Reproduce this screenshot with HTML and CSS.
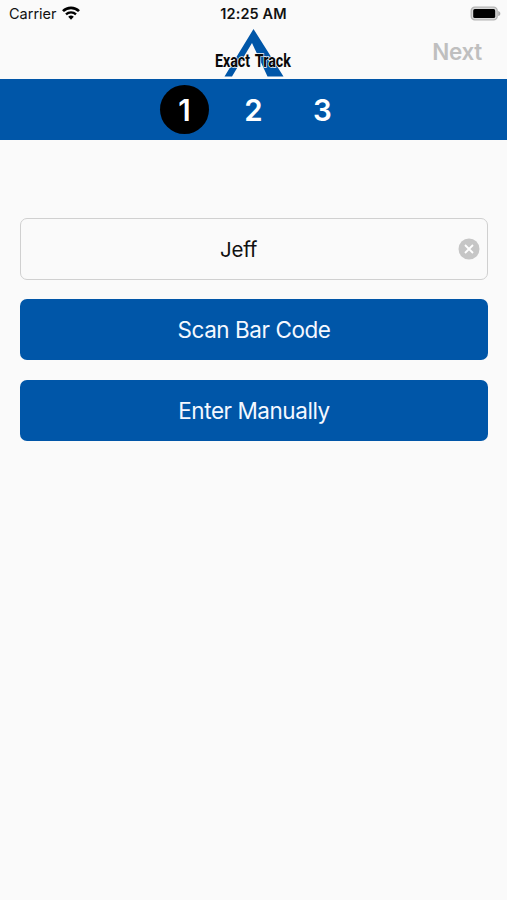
FILE: index.html
```
<!DOCTYPE html>
<html lang="en">
<head>
<meta charset="UTF-8">
<meta name="viewport" content="width=device-width, initial-scale=1.0">
<title>Exact Track</title>
<link rel="stylesheet" href="styles.css">
</head>
<body>
<div class="status-bar">
    <div class="carrier">
        <span>Carrier</span>
        <svg class="wifi" width="18" height="14" viewBox="0 0 18 14">
            <path d="M1 5.1a11.5 11.5 0 0 1 16 0" fill="none" stroke="#000" stroke-width="2.7"/>
            <path d="M4 8.3a7.2 7.2 0 0 1 10 0" fill="none" stroke="#000" stroke-width="2.3"/>
            <path d="M6.2 10.8a4.1 4.1 0 0 1 5.6 0L9 13.7z" fill="#000"/>
        </svg>
    </div>
    <div class="time">12:25 AM</div>
    <div class="power">
        <svg width="32" height="16" viewBox="0 0 32 16">
            <rect x="1.2" y="1.2" width="26" height="12.6" rx="3.6" fill="#d8d8d8" stroke="#b4b4b4" stroke-width="1.3"/>
            <path d="M28.2 4.9c2.8.8 2.8 4.4 0 5.2z" fill="#aaa"/>
            <rect x="3.2" y="3.1" width="22" height="8.9" rx="1.6" fill="#000"/>
        </svg>
    </div>
</div>
<div class="nav-bar">
    <svg class="logo" width="90" height="50" viewBox="0 0 90 50">
        <path d="M44.500 1L74.500 48.500H58.500L43 15L23 48.500H15.500z" fill="#0056a8"/>
        <text class="logo-text" transform="translate(6 38.500) scale(.77 1)">Exact Track</text>
    </svg>
    <a class="next">Next</a>
</div>
<div class="steps">
    <span class="step active">1</span>
    <span class="step">2</span>
    <span class="step">3</span>
</div>
<div class="container">
    <div class="field">
        <span class="value">Jeff</span>
        <svg class="clear" width="22" height="22" viewBox="0 0 22 22">
            <circle cx="11" cy="11" r="10.500" fill="#c6c6c6"/>
            <path d="M7 7l8 8M15 7l-8 8" stroke="#fff" stroke-width="1.8"/>
        </svg>
    </div>
    <button class="scan">Scan Bar Code</button>
    <button class="manual">Enter Manually</button>
</div>
</body>
</html>
```
FILE: styles.css
```
body {
    font-family: Inter, sans-serif;
    margin: 0;
    height: 900px;
    background-color: #fafafa;
    color: #111;
}

.status-bar {
    display: grid;
    grid-template-columns: 1fr auto 1fr;
    align-items: center;
    height: 27px;
    padding: 0 5px 0 9px;
    font-size: 14.5px;
}

.carrier {
    display: flex;
    align-items: center;
    gap: 5px;
}

.wifi {
    display: block;
    margin-bottom: 2px;
}

.time {
    font-weight: 600;
    font-size: 14.5px;
    letter-spacing: 0.1px;
    padding-right: 4px;
}

.power {
    display: flex;
    justify-content: flex-end;
}

.nav-bar {
    display: grid;
    grid-template-columns: 1fr auto 1fr;
    align-items: center;
    height: 52px;
    padding: 0 25px;
}

.logo {
    grid-column: 2;
}

.logo-text {
    font-family: Roboto, sans-serif;
    font-size: 18.5px;
    font-weight: 700;
    word-spacing: 2px;
    fill: #080808;
    stroke: #fafafa;
    stroke-width: 1.4px;
    paint-order: stroke;
}

.next {
    justify-self: end;
    padding-bottom: 4px;
    color: #bfbfbf;
    font-size: 22.5px;
    font-weight: 600;
    letter-spacing: -0.3px;
}

.steps {
    display: flex;
    justify-content: center;
    align-items: center;
    gap: 20px;
    height: 61px;
    background-color: #0056a8;
}

.step {
    width: 49px;
    height: 49px;
    line-height: 50px;
    border-radius: 50%;
    text-align: center;
    color: #fff;
    font-size: 29.5px;
    font-weight: 600;
}

.active {
    background-color: #000;
}

.container {
    display: flex;
    flex-direction: column;
    gap: 19.5px;
    padding: 78px 19px 0 20px;
}

.field {
    display: flex;
    align-items: center;
    box-sizing: border-box;
    height: 61.5px;
    padding-right: 7px;
    border: 1px solid #d0d0d0;
    border-radius: 7px;
}

.value {
    flex: 1;
    padding: 2px 2px 0 0;
    text-align: center;
    font-size: 20.5px;
    letter-spacing: -0.2px;
}

button {
    height: 61px;
    padding: 0;
    border: none;
    border-radius: 7px;
    background-color: #0056a8;
    color: #f4f8ff;
    font-family: Inter, sans-serif;
    font-size: 22.5px;
    letter-spacing: -0.45px;
}
```
